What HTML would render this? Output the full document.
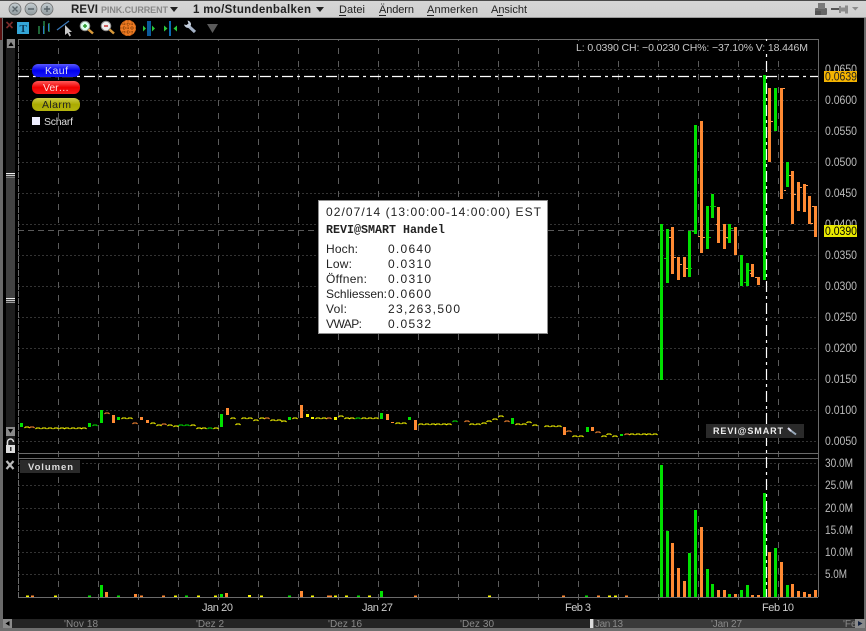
<!DOCTYPE html>
<html><head><meta charset="utf-8">
<style>
html,body{margin:0;padding:0;background:#000;width:866px;height:631px;overflow:hidden}
svg{display:block}
text{font-family:"Liberation Sans",sans-serif}
.ax{font-size:11.500px;fill:#bcbcbc}
.d{font-size:12px;fill:#222}
.m{font-size:10px;fill:#8a8a8a}
.menu{font-size:11px;fill:#222}
</style></head><body>
<svg width="866" height="631" viewBox="0 0 866 631" xmlns="http://www.w3.org/2000/svg">
<defs>
<linearGradient id="tb" x1="0" y1="0" x2="0" y2="1"><stop offset="0" stop-color="#d6d6d6"/><stop offset="1" stop-color="#cfcfcf"/></linearGradient>
<linearGradient id="bt" x1="0" y1="0" x2="0" y2="1"><stop offset="0" stop-color="#c4ccd0"/><stop offset="1" stop-color="#8f9a9e"/></linearGradient>
<linearGradient id="kb" x1="0" y1="0" x2="0" y2="1"><stop offset="0" stop-color="#5a5aff"/><stop offset=".5" stop-color="#0000f0"/><stop offset="1" stop-color="#1a1af8"/></linearGradient>
<linearGradient id="rb" x1="0" y1="0" x2="0" y2="1"><stop offset="0" stop-color="#ff5a5a"/><stop offset=".5" stop-color="#f00000"/><stop offset="1" stop-color="#f81a1a"/></linearGradient>
<linearGradient id="yb" x1="0" y1="0" x2="0" y2="1"><stop offset="0" stop-color="#cfcf4a"/><stop offset=".5" stop-color="#aaaa00"/><stop offset="1" stop-color="#b4b410"/></linearGradient>
</defs>
<rect width="866" height="631" fill="#000"/>

<!-- frame -->
<rect x="0" y="0" width="3" height="631" fill="#6a6a6a"/>
<rect x="0" y="18" width="2" height="22" fill="#5a1010"/>
<rect x="864" y="0" width="2" height="631" fill="#6a6a6a"/>
<rect x="0" y="628" width="866" height="3" fill="#6e6e6e"/>

<!-- title bar -->
<rect x="0" y="0" width="866" height="18" fill="url(#tb)"/>
<rect x="0" y="0" width="866" height="1" fill="#4a4a4a"/>
<rect x="0" y="17" width="866" height="1" fill="#9a9a9a"/>
<g stroke="#666" stroke-width=".7" fill="url(#bt)">
<circle cx="15" cy="9" r="6"/><circle cx="31" cy="9" r="6"/><circle cx="47" cy="9" r="6"/></g>
<path d="M12.500 6.500l5 5M17.500 6.500l-5 5M28 9h6M44 9h6M47 6v6" stroke="#59646a" stroke-width="1.400" fill="none"/>
<text x="71" y="13" font-size="11.500" font-weight="bold" fill="#222" textLength="27">REVI</text>
<text x="101" y="13" font-size="9" font-weight="bold" fill="#888" textLength="67">PINK.CURRENT</text>
<path d="M170 7h8l-4 5z" fill="#222"/>
<text x="193" y="13" font-size="11.500" font-weight="bold" fill="#222" textLength="118">1 mo/Stundenbalken</text>
<path d="M316 7h8l-4 5z" fill="#222"/>
<text class="menu" x="339" y="13" textLength="26">Datei</text>
<text class="menu" x="379" y="13" textLength="35">Ändern</text>
<text class="menu" x="427" y="13" textLength="51">Anmerken</text>
<text class="menu" x="491" y="13" textLength="36">Ansicht</text>
<path d="M339 15.500h7M379 15.500h7M427 15.500h7M497 15.500h6" stroke="#222" stroke-width="1"/>
<!-- right title icons -->
<rect x="815" y="8" width="12" height="7" rx="1" fill="#666"/>
<rect x="818" y="3" width="7" height="6" fill="#7a7a7a"/>
<rect x="815" y="11" width="6" height="4" fill="#555"/>
<path d="M831 9h8" stroke="#555" stroke-width="2"/>
<path d="M839 6h2v1.500h4v-2h3v8h-3v-2h-4v1.500h-2z" fill="#8c8c8c"/>
<path d="M852 7h6.500l-3.200 3.500z" fill="#8c8c8c"/>

<!-- toolbar icons -->
<path d="M6.500 22l6 6M12.500 22l-6 6" stroke="#7a2a2a" stroke-width="1.600"/>
<rect x="17" y="22" width="12" height="12" fill="#34a6d8"/>
<text x="19.500" y="32" font-size="11" font-weight="bold" fill="#0a3a5a" style="font-family:'Liberation Serif',serif">T</text>
<path d="M39 26v8M44 21v13M49 23v9" stroke="#3cc86c" stroke-width="1"/>
<path d="M43.500 26v8M48.500 24v7" stroke="#2a7ac8" stroke-width="1"/>
<path d="M57 30L69 21" stroke="#3a78b8" stroke-width="1.200"/>
<path d="M65 25v10l2.500-2 2 3.500 1.500-1-2-3.500h3z" fill="#c8c8c8"/>
<circle cx="85" cy="26" r="4.800" fill="#dfe" stroke="#8a8a8a"/><path d="M83 26h4M85 24v4" stroke="#2a9a2a" stroke-width="1.500"/>
<path d="M88.500 29.500l4.500 4" stroke="#d99a3a" stroke-width="2.500"/>
<circle cx="106" cy="26" r="4.800" fill="#eee" stroke="#8a8a8a"/><path d="M104 26h4" stroke="#c83030" stroke-width="1.500"/>
<path d="M109.500 29.500l4.500 4" stroke="#d99a3a" stroke-width="2.500"/>
<circle cx="128" cy="28" r="8" fill="#ee7a22"/>
<path d="M128 20v16M120 28h16M121.500 24h13M121.500 32h13M124 21v14M132 21v14" stroke="#6a3000" stroke-width=".7" stroke-dasharray="1.500 1"/>
<rect x="147" y="21" width="4" height="15" fill="#0a5a9a"/>
<path d="M146 28.500l-3-3v6zM152 25.500l3 3-3 3z" fill="#2ac83c"/>
<rect x="169" y="21" width="2" height="15" fill="#0a6ab0"/>
<path d="M164 25.500l3.500 3-3.500 3zM177 25.500l-3.500 3 3.500 3z" fill="#2ac83c"/>
<path d="M188.500 26l6.500 6" stroke="#a4b2c6" stroke-width="3.200"/>
<path d="M184 24.500a4 4 0 0 0 5.500 3l1.500-2.500a4 4 0 0 0-3.500-4.500l1 3-2 1.500z" fill="#c4cedc"/>
<path d="M207 24h11l-5.500 9z" fill="#5a5a5a"/>

<!-- left strip -->
<rect x="6" y="39" width="9" height="414" fill="#1e1e1e"/>
<rect x="6" y="173" width="9" height="130" fill="#424242"/>
<rect x="6" y="173" width="9" height="1" fill="#eee"/><rect x="6" y="175" width="9" height="1" fill="#ccc"/><rect x="6" y="177" width="9" height="1" fill="#777"/>
<rect x="6" y="298" width="9" height="1" fill="#eee"/><rect x="6" y="300" width="9" height="1" fill="#ccc"/><rect x="6" y="302" width="9" height="1" fill="#999"/>
<rect x="7" y="39" width="8" height="9" fill="#8a8a8a"/><path d="M8.500 46h5l-2.500-4z" fill="#000"/>
<rect x="6" y="427" width="9" height="9" fill="#8a8a8a"/><path d="M8 429h5l-2.500 4z" fill="#000"/>
<path d="M7.500 445v-3a3 3 0 0 1 6 0" fill="none" stroke="#ddd" stroke-width="1.500"/>
<rect x="6" y="445" width="9" height="8" fill="#ddd"/><rect x="10" y="447" width="1.500" height="4" fill="#333"/>
<path d="M6.500 461l7 8M13.500 461l-7 8" stroke="#bbb" stroke-width="2.200"/>

<!-- grid -->
<g fill="none" stroke="#333" stroke-width="1" stroke-dasharray="2 2" shape-rendering="crispEdges">
<path d="M18 69.500H818M18 100.500H818M18 131.500H818M18 162.500H818M18 193.500H818M18 224.500H818M18 255.500H818M18 286.500H818M18 317.500H818M18 348.500H818M18 379.500H818M18 410.500H818M18 441.500H818"/>
<path d="M18 463.500H818M18 485.500H818M18 508.500H818M18 530.500H818M18 552.500H818M18 574.500H818"/>
</g>
<path d="M58.500 39V600M98.500 39V600M138.500 39V600M178.500 39V600M218.500 39V600M258.500 39V600M298.500 39V600M338.500 39V600M378.500 39V600M418.500 39V600M458.500 39V600M498.500 39V600M538.500 39V600M578.500 39V600M618.500 39V600M658.500 39V600M698.500 39V600M738.500 39V600M778.500 39V600" stroke="#5c5c5c" stroke-width="1" stroke-dasharray="6 7" stroke-dashoffset="4" shape-rendering="crispEdges" fill="none"/>
<path d="M18 230.500H818" stroke="#5a5a5a" stroke-dasharray="6 4" shape-rendering="crispEdges"/>
<path d="M18.500 39V597" stroke="#6a6a6a" stroke-dasharray="6 1" shape-rendering="crispEdges"/>
<g stroke="#6a6a6a" shape-rendering="crispEdges" fill="none">
<path d="M18 39.500H818.500V597M18 453.500H818M18 458.500H818M18 597.500H818"/>
</g>

<!-- small bars main -->
<g fill="none" stroke-width="3" shape-rendering="crispEdges">
<path stroke="#00e000" d="M21.500 423V427M89.500 423V427M101.500 410V423M118.500 417V420M221.500 414V427M289.500 417V420M381.500 413V419M409.500 417V420M512.500 418V424M587.500 427V432M621.500 434V436"/>
<path stroke="#ff8a33" d="M113.500 415V423M141.500 417V420M147.500 420V423M227.500 408V415M301.500 405V418M387.500 414V420M415.500 420V430M564.500 427V435M592.500 427V431M392.500 422V423"/>
<path stroke="#f8f800" d="M307.500 414V417M312.500 417V419M335.500 417V420"/>
</g>
<g fill="none" stroke-width="1.100">
<path stroke="#ffff00" d="M24.500 428l1-1h3l1 1M35.500 429l1-1h3l1 1M41.500 429l1-1h3l1 1M47.500 429l1-1h3l1 1M53.500 429l1-1h3l1 1M59.500 429l1-1h3l1 1M64.500 429l1-1h3l1 1M70.500 429l1-1h3l1 1M76.500 429l1-1h3l1 1M81.500 429l1-1h3l1 1M121.500 419l1-1h3l1 1M127.500 419l1-1h3l1 1M150.500 424l1-1h3l1 1M156.500 426l1-1h3l1 1M167.500 426l1-1h3l1 1M173.500 427l1-1h3l1 1M190.500 426l1-1h3l1 1M196.500 429l1-1h3l1 1M201.500 429l1-1h3l1 1M213.500 429l1-1h3l1 1M230.500 419l1-1h3l1 1M235.500 425l1-1h3l1 1M241.500 419l1-1h3l1 1M247.500 419l1-1h3l1 1M253.500 421l1-1h3l1 1M259.500 419l1-1h3l1 1M270.500 421l1-1h3l1 1M276.500 421l1-1h3l1 1M281.500 422l1-1h3l1 1M292.500 419l1-1h3l1 1M315.500 419l1-1h3l1 1M321.500 419l1-1h3l1 1M338.500 417l1-1h3l1 1M344.500 419l1-1h3l1 1M349.500 419l1-1h3l1 1M361.500 419l1-1h3l1 1M367.500 419l1-1h3l1 1M373.500 419l1-1h3l1 1M395.500 424l1-1h3l1 1M401.500 424l1-1h3l1 1M418.500 425l1-1h3l1 1M424.500 425l1-1h3l1 1M430.500 425l1-1h3l1 1M435.500 425l1-1h3l1 1M441.500 425l1-1h3l1 1M446.500 425l1-1h3l1 1M469.500 425l1-1h3l1 1M475.500 425l1-1h3l1 1M481.500 424l1-1h3l1 1M486.500 422l1-1h3l1 1M492.500 420l1-1h3l1 1M498.500 417l1-1h3l1 1M515.500 425l1-1h3l1 1M521.500 425l1-1h3l1 1M526.500 423l1-1h3l1 1M532.500 426l1-1h3l1 1M544.500 427l1-1h3l1 1M550.500 427l1-1h3l1 1M556.500 427l1-1h3l1 1M572.500 437l1-1h3l1 1M578.500 437l1-1h3l1 1M601.500 437l1-1h3l1 1M606.500 435l1-1h3l1 1M612.500 437l1-1h3l1 1M629.500 435l1-1h3l1 1M635.500 435l1-1h3l1 1M641.500 435l1-1h3l1 1M646.500 435l1-1h3l1 1M652.500 435l1-1h3l1 1"/>
<path stroke="#00e000" d="M92.500 426l1-1h3l1 1M178.500 426l1-1h3l1 1M184.500 426l1-1h3l1 1M207.500 429l1-1h3l1 1M355.500 419l1-1h3l1 1M452.500 422l1-1h3l1 1"/>
<path stroke="#ff8a33" d="M29.500 428l1-1h3l1 1M104.500 414l1-1h3l1 1M132.500 424l1-1h3l1 1M161.500 425l1-1h3l1 1M264.500 419l1-1h3l1 1M326.500 419l1-1h3l1 1M464.500 422l1-1h3l1 1M504.500 422l1-1h3l1 1M566.500 432l1-1h3l1 1M595.500 433l1-1h3l1 1M624.500 435l1-1h3l1 1"/>
</g>

<!-- price bars -->
<g fill="none" stroke-width="3" shape-rendering="crispEdges">
<path stroke="#00e000" d="M661.500 224V380M667.500 229V283M689.500 231V277M695.500 125V234M707.500 206V249M712.500 194V218M729.500 224V243M741.500 255V286M747.500 263V286M764.500 75V280M775.500 88V131M787.500 162V187"/>
<path stroke="#ff8a33" d="M672.500 227V274M678.500 257V280M684.500 257V277M701.500 121V253M718.500 207V243M724.500 224V249M735.500 227V255M752.500 264V277M758.500 277V285M769.500 88V162M781.500 88V199M792.500 171V224M798.500 182V211M804.500 184V212M809.500 196V224M815.500 206V237"/>
</g>
<g fill="none" stroke-width="1" shape-rendering="crispEdges">
<path stroke="#ff9a50" d="M669 237.500h2M674 257.500h2M680 264.500h2M686 268.500h2M698 236.500h2M703 237.500h2M716 224.500h2M726 237.500h2M750 273.500h2M755 277.500h2M771 121.500h2M783 88.500h2M784 190.500h2M789 175.500h2M794 194.500h2M800 187.500h2M806 185.500h2M811 223.500h2M812 206.500h2"/>
<path stroke="#00c800" d="M664 258.500h2M692 231.500h2M690 268.500h2M709 237.500h2M710 206.500h2M714 206.500h2M727 238.500h2M731 228.500h2M744 282.500h2M749 270.500h2"/>
</g>

<!-- volume bars -->
<g fill="none" stroke-width="3" shape-rendering="crispEdges">
<path stroke="#00e000" d="M661.500 465V597M667.500 531V597M689.500 553V597M695.500 510V597M707.500 569V597M712.500 584V597M729.500 594V597M741.500 590V597M747.500 585V597M764.500 493V597M775.500 548V597M787.500 585V597M101.500 585V597M221.500 594V597M381.500 591V597"/>
<path stroke="#00e000" d="M89.500 595.500V597M118.500 595.500V597M186.500 595.500V597M289.500 595.500V597M358.500 595.500V597M586.500 595.500V597"/>
<path stroke="#ff8a33" d="M672.500 543V597M678.500 568V597M684.500 581V597M701.500 527V597M718.500 590V597M724.500 590V597M735.500 594V597M752.500 595V597M758.500 595V597M769.500 552V597M781.500 562V597M792.500 584V597M798.500 591V597M804.500 592V597M809.500 594V597M815.500 590V597M106.500 592V597M135.500 594V597M226.500 593V597M301.500 591V597"/>
<path stroke="#ff8a33" d="M32.500 595.500V597M141.500 595.500V597M163.500 595.500V597M328.500 595.500V597M330.500 595.500V597M415.500 595.500V597M563.500 595.500V597M598.500 595.500V597M626.500 595.500V597"/>
<path stroke="#f8f800" d="M249.500 595V597M27.500 595.500V597M55.500 595.500V597M175.500 595.500V597M198.500 595.500V597M215.500 595.500V597M261.500 595.500V597M312.500 595.500V597M335.500 595.500V597M346.500 595.500V597M369.500 595.500V597M489.500 595.500V597M609.500 595.500V597M615.500 595.500V597"/>
</g>

<!-- crosshair -->
<path d="M18 76.500H818" stroke="#fff" stroke-width="1.200" stroke-dasharray="11 4 3 4"/>
<path d="M766.500 39V597" stroke="#fff" stroke-width="1.200" stroke-dasharray="11 4 3 4" fill="none"/>

<!-- status -->
<rect x="574" y="41" width="236" height="13" fill="#000"/>
<text x="576" y="51" font-size="10.500" fill="#c8c8c8" textLength="232">L: 0.0390 CH: −0.0230 CH%: −37.10% V: 18.446M</text>

<!-- order buttons -->
<rect x="32" y="64" width="48" height="13" rx="6" fill="url(#kb)"/>
<text x="45" y="74" font-size="10.500" fill="#dde" textLength="23">Kauf</text>
<rect x="32" y="81" width="48" height="13" rx="6" fill="url(#rb)"/>
<text x="43" y="91" font-size="10.500" fill="#fdd" textLength="26">Ver…</text>
<rect x="32" y="98" width="48" height="13" rx="6" fill="url(#yb)"/>
<text x="42" y="108" font-size="10.500" fill="#222" textLength="29">Alarm</text>
<rect x="32" y="117" width="8" height="8" fill="#eef"/>
<text x="44" y="125" font-size="10.500" fill="#ddd" textLength="29">Scharf</text>

<!-- price axis labels -->
<text class="ax" x="825" y="73" textLength="32" lengthAdjust="spacingAndGlyphs">0.0650</text>
<text class="ax" x="825" y="104" textLength="32" lengthAdjust="spacingAndGlyphs">0.0600</text>
<text class="ax" x="825" y="135" textLength="32" lengthAdjust="spacingAndGlyphs">0.0550</text>
<text class="ax" x="825" y="166" textLength="32" lengthAdjust="spacingAndGlyphs">0.0500</text>
<text class="ax" x="825" y="197" textLength="32" lengthAdjust="spacingAndGlyphs">0.0450</text>
<text class="ax" x="825" y="228" textLength="32" lengthAdjust="spacingAndGlyphs">0.0400</text>
<text class="ax" x="825" y="259" textLength="32" lengthAdjust="spacingAndGlyphs">0.0350</text>
<text class="ax" x="825" y="290" textLength="32" lengthAdjust="spacingAndGlyphs">0.0300</text>
<text class="ax" x="825" y="321" textLength="32" lengthAdjust="spacingAndGlyphs">0.0250</text>
<text class="ax" x="825" y="352" textLength="32" lengthAdjust="spacingAndGlyphs">0.0200</text>
<text class="ax" x="825" y="383" textLength="32" lengthAdjust="spacingAndGlyphs">0.0150</text>
<text class="ax" x="825" y="414" textLength="32" lengthAdjust="spacingAndGlyphs">0.0100</text>
<text class="ax" x="825" y="445" textLength="32" lengthAdjust="spacingAndGlyphs">0.0050</text>
<rect x="824" y="71" width="33" height="11" fill="#f5b400"/>
<text x="825" y="80.500" font-size="11.500" fill="#222" textLength="32" lengthAdjust="spacingAndGlyphs">0.0639</text>
<rect x="824" y="225" width="33" height="12" fill="#e8e800"/>
<text x="825" y="235" font-size="11.500" fill="#000" textLength="32" lengthAdjust="spacingAndGlyphs">0.0390</text>
<text class="ax" x="825" y="467" textLength="28" lengthAdjust="spacingAndGlyphs">30.0M</text>
<text class="ax" x="825" y="489" textLength="28" lengthAdjust="spacingAndGlyphs">25.0M</text>
<text class="ax" x="825" y="512" textLength="28" lengthAdjust="spacingAndGlyphs">20.0M</text>
<text class="ax" x="825" y="534" textLength="28" lengthAdjust="spacingAndGlyphs">15.0M</text>
<text class="ax" x="825" y="556" textLength="28" lengthAdjust="spacingAndGlyphs">10.0M</text>
<text class="ax" x="825" y="578" textLength="22" lengthAdjust="spacingAndGlyphs">5.0M</text>

<!-- volume tab -->
<rect x="20" y="460" width="60" height="13" fill="#2a2a2a"/>
<text x="28" y="470" font-size="9.500" font-weight="bold" fill="#ddd" textLength="45">Volumen</text>

<!-- REVI badge -->
<rect x="706" y="424" width="98" height="14" fill="#2a2a2a"/>
<text x="713" y="434" font-size="9" font-weight="bold" fill="#eee" textLength="70">REVI@SMART</text>
<path d="M790 430l6 4.500" stroke="#9ab" stroke-width="2"/>
<path d="M788 428l3 3" stroke="#dde" stroke-width="2"/>

<!-- x labels -->
<text x="202" y="611" font-size="11" fill="#ccc" textLength="31">Jan 20</text>
<text x="362" y="611" font-size="11" fill="#ccc" textLength="31">Jan 27</text>
<text x="565" y="611" font-size="11" fill="#ccc" textLength="26">Feb 3</text>
<text x="762" y="611" font-size="11" fill="#ccc" textLength="32">Feb 10</text>

<!-- navigator -->
<rect x="3" y="619" width="861" height="9" fill="#242424"/>
<rect x="590" y="619" width="274" height="9" fill="#3a3a3a"/>
<rect x="590" y="619" width="3" height="9" fill="#ddd"/><rect x="593" y="619" width="1" height="9" fill="#777"/>
<rect x="3" y="619" width="9" height="9" fill="#8a8a8a"/><path d="M9.500 621v5l-4-2.500z" fill="#000"/>
<rect x="855" y="619" width="10" height="9" fill="#8a8a8a"/><path d="M858 621v5l4.500-2.500z" fill="#102040"/>
<text class="m" x="64" y="627" textLength="34">'Nov 18</text>
<text class="m" x="196" y="627" textLength="28">'Dez 2</text>
<text class="m" x="328" y="627" textLength="34">'Dez 16</text>
<text class="m" x="460" y="627" textLength="34">'Dez 30</text>
<text class="m" x="595" y="627" textLength="28">Jan 13</text>
<text class="m" x="711" y="627" textLength="31">'Jan 27</text>
<text class="m" x="843" y="627">'Fe</text>

<!-- dialog -->
<rect x="318.500" y="200.500" width="229" height="133" fill="#fff" stroke="#8f8f8f"/>
<text class="d" x="326" y="216" textLength="215">02/07/14 (13:00:00-14:00:00) EST</text>
<text x="326" y="233" font-size="11.670" font-weight="bold" fill="#222" style="font-family:'Liberation Mono',monospace">REVI@SMART Handel</text>
<text class="d" x="326" y="253" textLength="32">Hoch:</text><text class="d" x="388" y="253" textLength="43">0.0640</text>
<text class="d" x="326" y="268" textLength="26">Low:</text><text class="d" x="388" y="268" textLength="43">0.0310</text>
<text class="d" x="326" y="283" textLength="41">Öffnen:</text><text class="d" x="388" y="283" textLength="43">0.0310</text>
<text class="d" x="326" y="298" textLength="61">Schliessen:</text><text class="d" x="388" y="298" textLength="43">0.0600</text>
<text class="d" x="326" y="313" textLength="21">Vol:</text><text class="d" x="388" y="313" textLength="72">23,263,500</text>
<text class="d" x="326" y="328" textLength="36">VWAP:</text><text class="d" x="388" y="328" textLength="43">0.0532</text>
</svg>
</body></html>
